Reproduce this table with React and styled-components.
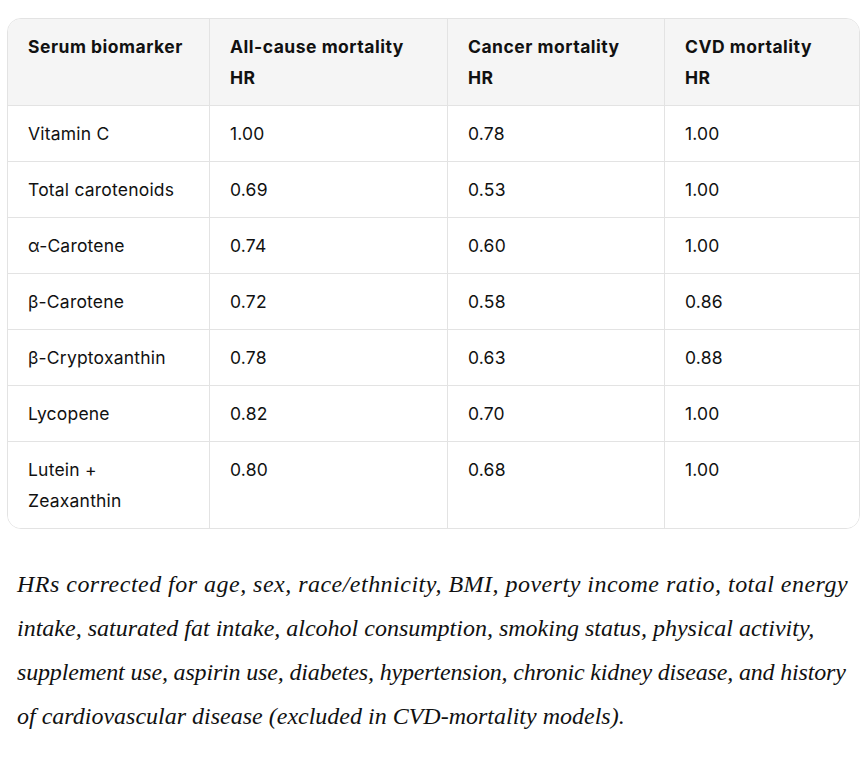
import React from 'react';
import styled, { createGlobalStyle } from 'styled-components';

const GlobalStyle = createGlobalStyle`
  body {
    margin: 0;
    background: #ffffff;
    font-family: Inter, "Noto Sans", sans-serif;
    color: #111111;
  }
`;

const Page = styled.div`
  width: 866px;
  padding: 18px 6px 0 7px;
  box-sizing: border-box;
`;

const Table = styled.div`
  display: grid;
  grid-template-columns: 202px 238px 217px 1fr;
  border: 1px solid #e3e3e3;
  border-radius: 14px;
  overflow: hidden;
`;

const Cell = styled.div`
  padding: 12px 20px;
  font-size: 17.5px;
  line-height: 31px;
  font-weight: ${(p) => (p.$head ? 700 : 400)};
  letter-spacing: ${(p) => (p.$head ? '0.5px' : '0.2px')};
  background: ${(p) => (p.$head ? '#f5f5f5' : '#ffffff')};
  border-right: ${(p) => (p.$last ? 'none' : '1px solid #e3e3e3')};
  border-bottom: ${(p) => (p.$bottom ? 'none' : '1px solid #e3e3e3')};
`;

const Note = styled.div`
  margin: 33px 0 0 10px;
  font-family: "Liberation Serif", serif;
  font-style: italic;
  font-size: 24px;
  line-height: 44px;
  color: #111111;
`;

const NoteLine = styled.div`
  white-space: nowrap;
  letter-spacing: ${(p) => p.$spacing || 0}px;
`;

const heads = [
  ['Serum biomarker'],
  ['All-cause mortality', 'HR'],
  ['Cancer mortality', 'HR'],
  ['CVD mortality', 'HR'],
];

const rows = [
  ['Vitamin C', '1.00', '0.78', '1.00'],
  ['Total carotenoids', '0.69', '0.53', '1.00'],
  ['\u03b1-Carotene', '0.74', '0.60', '1.00'],
  ['\u03b2-Carotene', '0.72', '0.58', '0.86'],
  ['\u03b2-Cryptoxanthin', '0.78', '0.63', '0.88'],
  ['Lycopene', '0.82', '0.70', '1.00'],
  ['Lutein +\nZeaxanthin', '0.80', '0.68', '1.00'],
];

const noteLines = [
  { text: 'HRs corrected for age, sex, race/ethnicity, BMI, poverty income ratio, total energy', spacing: 0.48 },
  { text: 'intake, saturated fat intake, alcohol consumption, smoking status, physical activity,', spacing: 0 },
  { text: 'supplement use, aspirin use, diabetes, hypertension, chronic kidney disease, and history', spacing: -0.17 },
  { text: 'of cardiovascular disease (excluded in CVD-mortality models).', spacing: 0 },
];

const App = () => {
  return (
    <Page>
      <GlobalStyle />
      <Table>
        {heads.map((h, i) => (
          <Cell key={'h' + i} $head $last={i === 3}>
            {h.map((line, j) => (
              <div key={j}>{line}</div>
            ))}
          </Cell>
        ))}
        {rows.map((r, ri) =>
          r.map((v, ci) => (
            <Cell key={ri + '-' + ci} $last={ci === 3} $bottom={ri === rows.length - 1}>
              {v.split('\n').map((line, j) => (
                <div key={j}>{line}</div>
              ))}
            </Cell>
          ))
        )}
      </Table>
      <Note>
        {noteLines.map((line, i) => (
          <NoteLine key={i} $spacing={line.spacing}>
            {line.text}
          </NoteLine>
        ))}
      </Note>
    </Page>
  );
};

export default App;
